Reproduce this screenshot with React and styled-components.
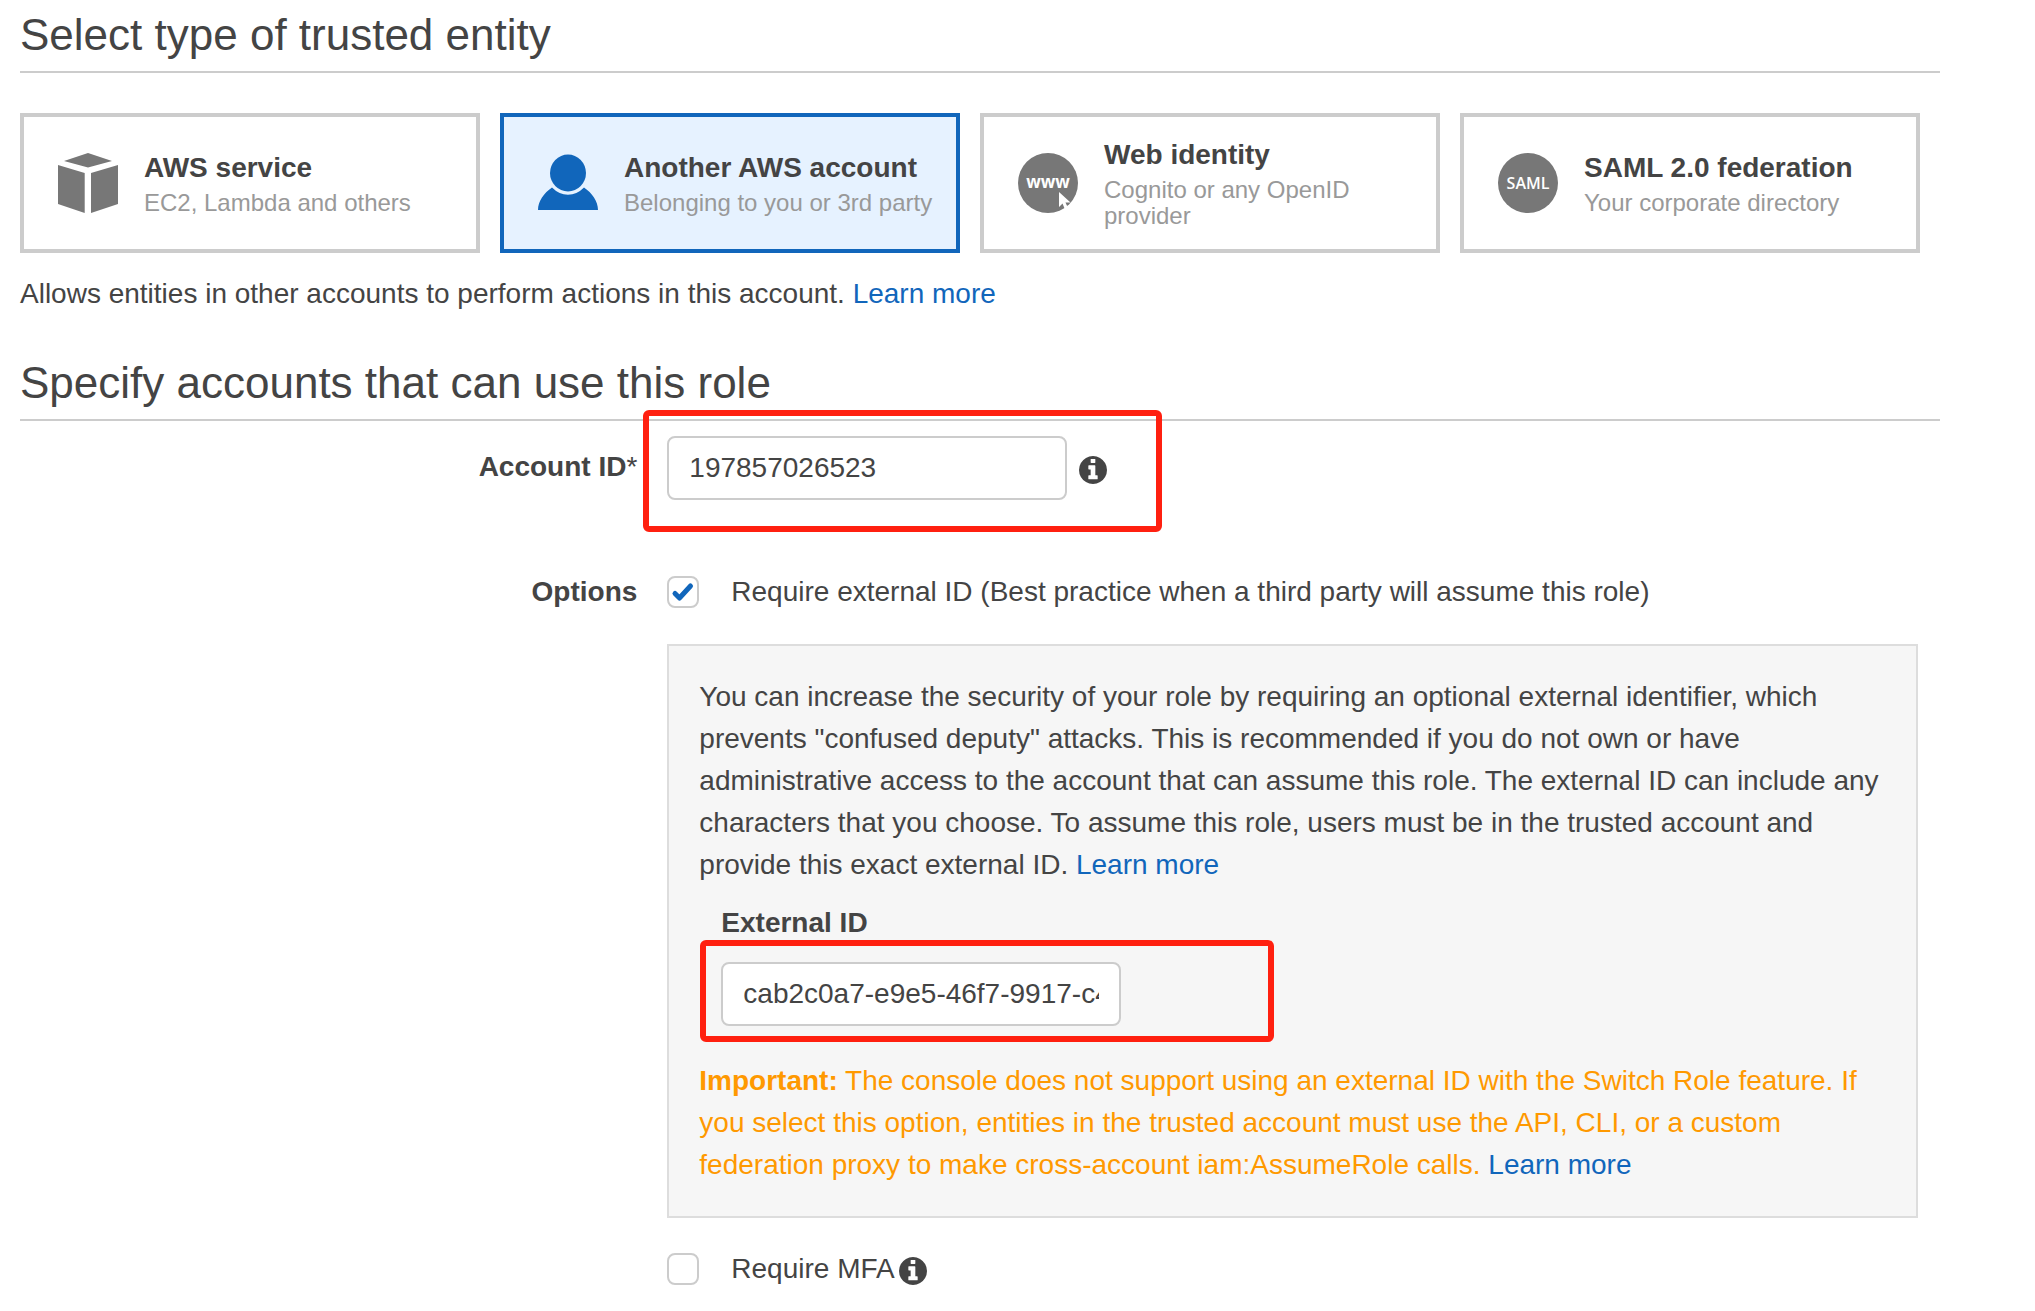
import React, { useState } from "react";
import styled, { createGlobalStyle } from "styled-components";

const GlobalStyle = createGlobalStyle`
  * { box-sizing: border-box; }
  body {
    margin: 0;
    background: #fff;
    color: #444;
    font: 28px/42px "Liberation Sans", Arial, sans-serif;
  }
  button, input { font: inherit; color: inherit; }
`;

const Page = styled.main`
  padding: 5px 95px 20px 20px;
`;

const Heading = styled.h2`
  margin: 0;
  padding-bottom: 6px;
  border-bottom: 2px solid #ccc;
  font-size: 44px;
  font-weight: 400;
  line-height: 60px;
`;

const CardRow = styled.div`
  display: grid;
  grid-template-columns: repeat(4, 1fr);
  gap: 20px;
  margin: 40px 20px 20px 0;
`;

const Card = styled.button`
  display: flex;
  align-items: center;
  gap: 26px;
  min-height: 140px;
  padding: 0 14px 0 34px;
  border: 4px solid ${(p) => (p.$selected ? "#1166bb" : "#ccc")};
  background: ${(p) => (p.$selected ? "#e6f2ff" : "#fff")};
  text-align: left;
  cursor: pointer;

  svg {
    flex: none;
    width: 60px;
    height: 60px;
    color: ${(p) => (p.$selected ? "#1166bb" : "#777")};
  }
`;

const CardText = styled.span`
  display: flex;
  flex-direction: column;
  gap: 6px;
  padding-top: 2px;
`;

const CardTitle = styled.strong`
  line-height: 32px;
`;

const CardNote = styled.span`
  color: #999;
  font-size: 24px;
  line-height: 26px;
`;

const Description = styled.p`
  margin: 0 0 38px;
`;

const Link = styled.a`
  color: #1166bb;
  text-decoration: none;
`;

const Row = styled.div`
  display: grid;
  grid-template-columns: minmax(0, 1fr) minmax(0, 2fr);
  margin: ${(p) => p.$top}px 7px 0 -8px;
`;

const RowLabel = styled.div`
  padding: ${(p) => p.$pad}px 15px 0;
  font-weight: 700;
  text-align: right;
`;

const RowBody = styled.div`
  padding: 0 15px;
`;

const Required = styled.span`
  font-weight: 400;
`;

const Marked = styled.div`
  position: relative;
  display: flex;
  align-items: center;
  gap: 12px;
  width: fit-content;
`;

const Highlight = styled.span`
  position: absolute;
  top: ${(p) => p.$top}px;
  left: ${(p) => p.$left}px;
  width: ${(p) => p.$width}px;
  height: ${(p) => p.$height}px;
  border: 6px solid #ff2010;
  border-radius: 6px;
  pointer-events: none;
`;

const TextInput = styled.input`
  width: 400px;
  height: 64px;
  padding: 0 20px;
  border: 2px solid #ccc;
  border-radius: 8px;
  background: #fff;
`;

const InfoSvg = styled.svg`
  flex: none;
  width: 28px;
  height: 28px;
  margin-top: 4px;
`;

const Option = styled.div`
  display: flex;
  align-items: center;
`;

const OptionLabel = styled.label`
  display: flex;
  align-items: center;
  gap: 32px;
  margin-right: 4px;
`;

const CheckSlot = styled.span`
  display: grid;
  width: 32px;
  height: 32px;

  > * { grid-area: 1 / 1; place-self: center; }
  svg { color: #1166bb; pointer-events: none; }
`;

const CheckInput = styled.input`
  appearance: none;
  width: 32px;
  height: 32px;
  margin: 0;
  border: 2px solid #ccc;
  border-radius: 8px;
  background: #fff;
`;

const Panel = styled.section`
  margin: 31px 0 30px;
  padding: 30px;
  border: 2px solid #ddd;
  background: #f6f6f6;
`;

const Paragraph = styled.p`
  margin: 0;
  color: ${(p) => (p.$warning ? "#ff9900" : "inherit")};
`;

const ExternalField = styled.div`
  margin: 16px 0 34px 22px;
`;

const FieldLabel = styled.label`
  display: block;
  margin-bottom: 18px;
  font-weight: 700;
`;

const CubeIcon = () => (
  <svg viewBox="0 0 60 60" fill="currentColor" aria-hidden="true">
    <path d="M30 0 54 8 30 14.500 6 8zM0 12 26.700 20V60L0 51zM60 12 33 20V60L60 51z" />
  </svg>
);

const PersonIcon = () => (
  <svg viewBox="0 0 60 60" fill="currentColor" aria-hidden="true">
    <ellipse cx="30" cy="20" rx="18" ry="18.500" />
    <path d="M14 34.500Q21 41.700 30 41.700T46 34.500C54 40 60 48 60 57H0C0 48 6 40 14 34.500z" />
  </svg>
);

const WebIcon = () => (
  <svg viewBox="0 0 60 60" aria-hidden="true">
    <circle cx="30" cy="30" r="30" fill="currentColor" />
    <text x="30" y="35" fill="#fff" textAnchor="middle" fontFamily="Open Sans, sans-serif" fontWeight="700" fontSize="17">www</text>
    <path d="M41 39v15l3.500-3.500 2.500 6 3-1.500-2.500-5.500h5z" fill="#fff" />
  </svg>
);

const SamlIcon = () => (
  <svg viewBox="0 0 60 60" aria-hidden="true">
    <circle cx="30" cy="30" r="30" fill="currentColor" />
    <text x="30" y="36" fill="#fff" textAnchor="middle" fontFamily="Open Sans, sans-serif" fontWeight="600" fontSize="16">SAML</text>
  </svg>
);

const CheckIcon = () => (
  <svg width="24" height="24" viewBox="0 0 24 24" fill="none" stroke="currentColor" strokeWidth="5" strokeLinecap="round" strokeLinejoin="round" aria-hidden="true">
    <path d="M4 13.500 8.500 18 19.500 6" />
  </svg>
);

const InfoIcon = () => (
  <InfoSvg viewBox="0 128 1536 1536" fill="currentColor" aria-hidden="true">
    <path d="M1024 1376v-160q0-14-9-23t-23-9h-96v-512q0-14-9-23t-23-9h-320q-14 0-23 9t-9 23v160q0 14 9 23t23 9h96v320h-96q-14 0-23 9t-9 23v160q0 14 9 23t23 9h448q14 0 23-9t9-23zm-128-896v-160q0-14-9-23t-23-9h-192q-14 0-23 9t-9 23v160q0 14 9 23t23 9h192q14 0 23-9t9-23zm640 416q0 209-103 385.500t-279.500 279.500-385.500 103-385.500-103-279.500-279.500-103-385.500 103-385.500 279.500-279.500 385.500-103 385.500 103 279.500 279.500 103 385.500z" />
  </InfoSvg>
);

const entityTypes = [
  { title: "AWS service", note: "EC2, Lambda and others", Icon: CubeIcon },
  { title: "Another AWS account", note: "Belonging to you or 3rd party", Icon: PersonIcon },
  { title: "Web identity", note: "Cognito or any OpenID provider", Icon: WebIcon },
  { title: "SAML 2.0 federation", note: "Your corporate directory", Icon: SamlIcon },
];

function CheckOption({ label, checked, onChange, children }) {
  return (
    <Option>
      <OptionLabel>
        <CheckSlot>
          <CheckInput type="checkbox" checked={checked} onChange={(e) => onChange(e.target.checked)} />
          {checked && <CheckIcon />}
        </CheckSlot>
        {label}
      </OptionLabel>
      {children}
    </Option>
  );
}

export default function App() {
  const [entity, setEntity] = useState("Another AWS account");
  const [requireId, setRequireId] = useState(true);
  const [requireMfa, setRequireMfa] = useState(false);

  return (
    <Page>
      <GlobalStyle />
      <Heading>Select type of trusted entity</Heading>
      <CardRow>
        {entityTypes.map(({ title, note, Icon }) => (
          <Card key={title} type="button" $selected={title === entity} aria-pressed={title === entity} onClick={() => setEntity(title)}>
            <Icon />
            <CardText>
              <CardTitle>{title}</CardTitle>
              <CardNote>{note}</CardNote>
            </CardText>
          </Card>
        ))}
      </CardRow>
      <Description>
        Allows entities in other accounts to perform actions in this account. <Link href="#accounts">Learn more</Link>
      </Description>

      <Heading id="accounts">Specify accounts that can use this role</Heading>
      <Row $top={15}>
        <RowLabel $pad={10}>
          <label htmlFor="account-id">Account ID<Required>*</Required></label>
        </RowLabel>
        <RowBody>
          <Marked>
            <TextInput id="account-id" type="text" defaultValue="197857026523" />
            <InfoIcon />
            <Highlight $top={-26} $left={-24} $width={519} $height={122} />
          </Marked>
        </RowBody>
      </Row>
      <Row $top={71}>
        <RowLabel $pad={0}>Options</RowLabel>
        <RowBody>
          <CheckOption label="Require external ID (Best practice when a third party will assume this role)" checked={requireId} onChange={setRequireId} />
          <Panel>
            <Paragraph>
              You can increase the security of your role by requiring an optional external identifier, which prevents
              "confused deputy" attacks. This is recommended if you do not own or have administrative access to the
              account that can assume this role. The external ID can include any characters that you choose. To assume
              this role, users must be in the trusted account and provide this exact external ID.{" "}
              <Link href="#external-id-help">Learn more</Link>
            </Paragraph>
            <ExternalField>
              <FieldLabel htmlFor="external-id">External ID</FieldLabel>
              <Marked>
                <TextInput id="external-id" type="text" defaultValue="cab2c0a7-e9e5-46f7-9917-c4" />
                <Highlight $top={-22} $left={-21} $width={574} $height={102} />
              </Marked>
            </ExternalField>
            <Paragraph $warning>
              <strong>Important:</strong> The console does not support using an external ID with the Switch Role
              feature. If you select this option, entities in the trusted account must use the API, CLI, or a custom
              federation proxy to make cross-account iam:AssumeRole calls. <Link href="#switch-role">Learn more</Link>
            </Paragraph>
          </Panel>
          <CheckOption label="Require MFA" checked={requireMfa} onChange={setRequireMfa}>
            <InfoIcon />
          </CheckOption>
        </RowBody>
      </Row>
    </Page>
  );
}
